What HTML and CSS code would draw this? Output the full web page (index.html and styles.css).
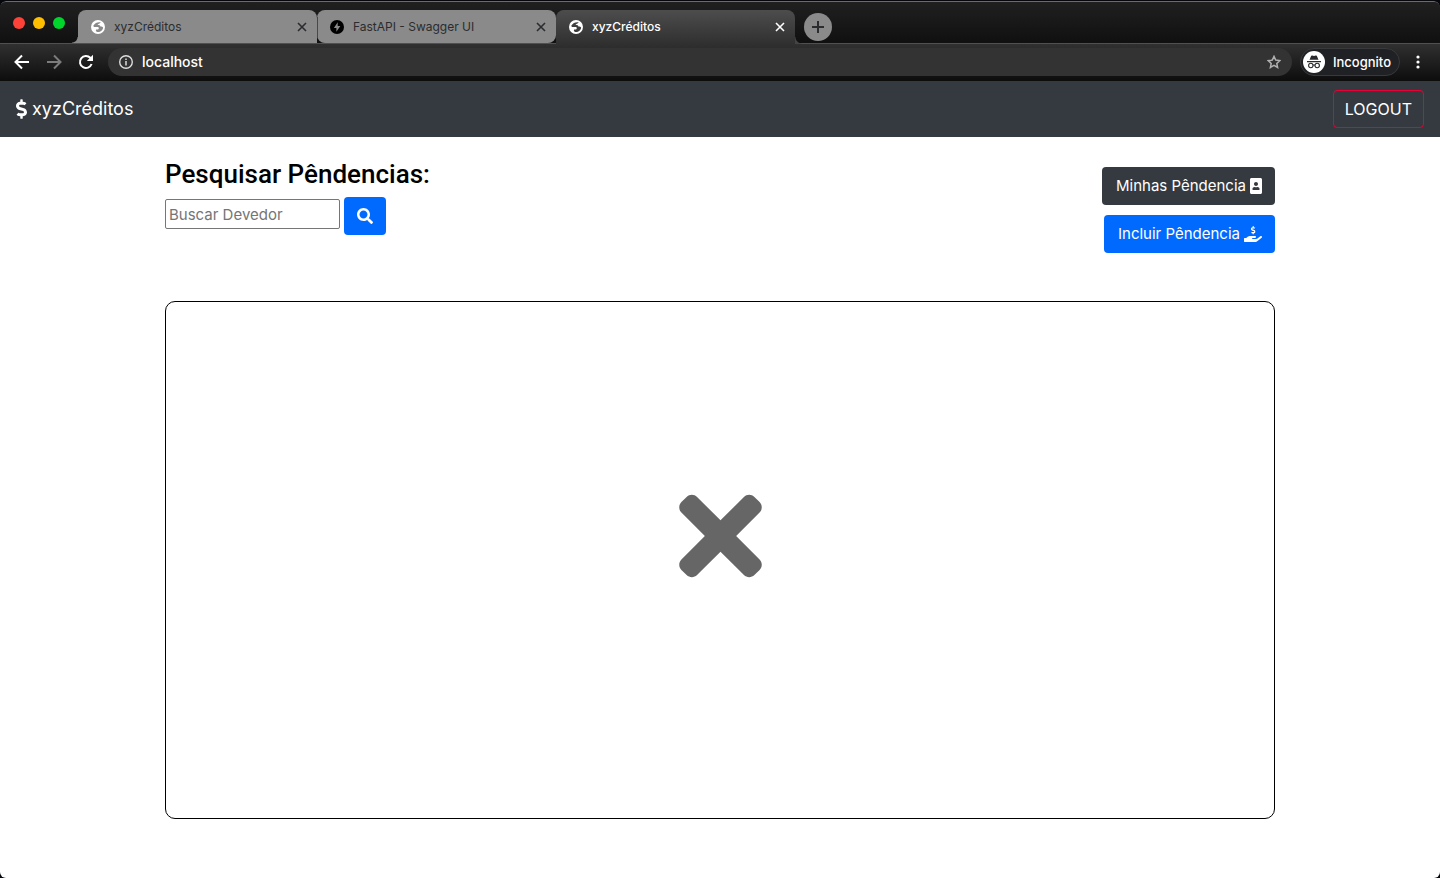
FILE: index.html
```
<!DOCTYPE html>
<html lang="pt-BR">
<head>
<meta charset="utf-8">
<meta name="viewport" content="width=device-width, initial-scale=1">
<title>xyzCréditos</title>
<link rel="stylesheet" href="styles.css">
</head>
<body>
<svg class="symbols" aria-hidden="true">
  <symbol id="globe" viewBox="0 0 14 14"><path fill="currentColor" fill-rule="evenodd" d="M7 0a7 7 0 1 1 0 14A7 7 0 0 1 7 0ZM9.800 2.600C7.500 1.600 4 2.800 2.400 5.600c-.2.800.4 1.500 1.300 1.500h2.800c.8 0 1.300.5 1.300 1.200 0 .8-.7 1.200-1.600 1.200H5c-.5 1 .2 2.300 1.500 2.500 3 .2 5.500-1.900 5.600-4.500-.6-.9-1.600-1.200-2.600-1.100-.5-1.200-1.600-1.500-3-1.300.6-1.200 2.100-1.100 3.300-2.500Z"/></symbol>
  <symbol id="close" viewBox="0 0 10 10"><path d="M1 1l8 8M9 1L1 9" fill="none" stroke="currentColor" stroke-width="1.6"/></symbol>
  <symbol id="dollar" viewBox="0 0 288 512"><path fill="currentColor" d="M209.2 233.4l-108-31.6C88.7 198.2 80 186.5 80 173.5c0-16.3 13.2-29.5 29.5-29.5h66.3c12.2 0 24.2 3.7 34.2 10.5 6.1 4.1 14.3 3.1 19.5-2l34.8-34c7.1-6.9 6.1-18.4-1.8-24.5C238 74.8 207.4 64.1 176 64V16c0-8.8-7.2-16-16-16h-32c-8.800 0-16 7.200-16 16v48h-2.500C45.800 64-5.400 118.700.500 183.600c4.200 46.100 39.400 83.600 83.800 96.600l102.500 30c12.500 3.700 21.200 15.300 21.200 28.300 0 16.300-13.200 29.500-29.500 29.500h-66.300C100 368 88 364.300 78 357.500c-6.100-4.100-14.300-3.100-19.500 2l-34.800 34c-7.100 6.900-6.100 18.400 1.800 24.500 24.500 19.200 55.100 29.900 86.500 30v48c0 8.800 7.200 16 16 16h32c8.800 0 16-7.200 16-16v-48.200c46.600-.9 90.300-28.600 105.700-72.700 21.500-61.600-14.600-124.800-72.500-141.700z"/></symbol>
</svg>

<div class="window">
  <header class="browser">
    <div class="tabstrip">
      <div class="lights"><span class="light light-red"></span><span class="light light-yellow"></span><span class="light light-green"></span></div>
      <div class="tabs">
        <div class="tab tab-first"><svg class="favicon"><use href="#globe"/></svg><span class="tab-title">xyzCréditos</span><button class="tab-close" aria-label="Fechar aba"><svg><use href="#close"/></svg></button></div>
        <div class="tab tab-divided"><svg class="favicon favicon-dark" viewBox="0 0 14 14"><circle cx="7" cy="7" r="7" fill="currentColor"/><path d="M7.700 2.200L3.900 8h2.500v3.800L10.300 6H7.700Z" fill="#8a8a8a"/></svg><span class="tab-title">FastAPI - Swagger UI</span><button class="tab-close" aria-label="Fechar aba"><svg><use href="#close"/></svg></button></div>
        <div class="tab tab-active"><svg class="favicon"><use href="#globe"/></svg><span class="tab-title">xyzCréditos</span><button class="tab-close" aria-label="Fechar aba"><svg><use href="#close"/></svg></button></div>
      </div>
      <button class="new-tab" aria-label="Nova aba"><svg viewBox="0 0 12 12"><path d="M6 0v12M0 6h12" stroke="currentColor" stroke-width="2"/></svg></button>
    </div>
    <div class="toolbar">
      <div class="nav-buttons">
        <button class="nav-button" aria-label="Voltar"><svg viewBox="0 0 16 16"><path d="M15 8H2M8 1.500L1.500 8 8 14.500" fill="none" stroke="currentColor" stroke-width="2"/></svg></button>
        <button class="nav-button nav-button-off" aria-label="Avançar"><svg viewBox="0 0 16 16"><path d="M1 8h13M8 1.500L14.500 8 8 14.500" fill="none" stroke="currentColor" stroke-width="2"/></svg></button>
        <button class="nav-button" aria-label="Recarregar"><svg viewBox="0 0 16 16"><path d="M13.600 10A6 6 0 1 1 12.300 3.800L13.500 5" fill="none" stroke="currentColor" stroke-width="2"/><path d="M15 .8v6.200H8.800Z" fill="currentColor"/></svg></button>
      </div>
      <div class="omnibox">
        <svg class="info" viewBox="0 0 14 14"><circle cx="7" cy="7" r="6.300" fill="none" stroke="currentColor" stroke-width="1.400"/><path d="M7 6v4.500M7 3.400v1.500" stroke="currentColor" stroke-width="1.500"/></svg>
        <input class="address" type="text" value="localhost" aria-label="Endereço">
        <button class="star" aria-label="Favoritar"><svg viewBox="0 0 14 14"><path d="M7 1.400l1.700 3.700 4.200.5-3.100 2.800.8 4.100L7 10.400l-3.600 2.100.8-4.100L1.100 5.600l4.200-.5Z" fill="none" stroke="currentColor" stroke-width="1.500"/></svg></button>
      </div>
      <button class="incognito"><svg viewBox="0 0 22 22"><circle cx="11" cy="11" r="11" fill="#fff"/><path d="M6.500 8.700L8 5.200c.2-.6.700-.8 1.300-.6l1.700.5 1.700-.5c.6-.2 1.100 0 1.300.6l1.500 3.500Z" fill="#292a2d"/><path d="M4 10.600h14" stroke="#292a2d" stroke-width="1.200"/><circle cx="7.800" cy="14.500" r="2.200" fill="none" stroke="#292a2d" stroke-width="1.100"/><circle cx="14.200" cy="14.500" r="2.200" fill="none" stroke="#292a2d" stroke-width="1.100"/><path d="M10 14.200q1-.6 2 0" fill="none" stroke="#292a2d"/></svg>Incognito</button>
      <button class="menu" aria-label="Menu"><svg viewBox="0 0 4 14"><g fill="currentColor"><circle cx="2" cy="2" r="1.600"/><circle cx="2" cy="7" r="1.600"/><circle cx="2" cy="12" r="1.600"/></g></svg></button>
    </div>
  </header>

  <nav class="navbar">
    <a class="brand" href="#"><svg><use href="#dollar"/></svg>xyzCréditos</a>
    <button class="button button-logout">LOGOUT</button>
  </nav>

  <main class="container">
    <div class="top">
      <form class="search">
        <label class="heading" for="devedor">Pesquisar Pêndencias:</label>
        <div class="search-row">
          <input class="search-input" id="devedor" type="text" placeholder="Buscar Devedor">
          <button class="button button-primary" type="button" aria-label="Buscar"><svg class="icon" viewBox="0 0 512 512"><path fill="currentColor" d="M505 442.700L405.300 343c-4.500-4.500-10.600-7-17-7H372c27.600-35.300 44-79.700 44-128C416 93.100 322.900 0 208 0S0 93.100 0 208s93.100 208 208 208c48.300 0 92.700-16.400 128-44v16.300c0 6.400 2.500 12.500 7 17l99.700 99.700c9.400 9.400 24.600 9.400 33.900 0l28.300-28.300c9.400-9.400 9.400-24.600.1-34zM208 336c-70.700 0-128-57.200-128-128 0-70.700 57.200-128 128-128 70.700 0 128 57.200 128 128 0 70.700-57.200 128-128 128z"/></svg></button>
        </div>
      </form>
      <div class="actions">
        <button class="button button-dark">Minhas Pêndencia<svg class="icon icon-narrow" viewBox="0 0 384 512"><path fill="currentColor" d="M336 0H48C21.500 0 0 21.500 0 48v416c0 26.500 21.500 48 48 48h288c26.500 0 48-21.500 48-48V48c0-26.500-21.500-48-48-48zM192 128c35.300 0 64 28.700 64 64s-28.700 64-64 64-64-28.700-64-64 28.700-64 64-64zm112 236.800c0 10.600-10 19.200-22.400 19.200H102.400C90 384 80 375.400 80 364.800v-19.200c0-31.800 30.100-57.600 67.200-57.600h5c12.300 5.100 25.700 8 39.800 8s27.600-2.900 39.800-8h5c37.100 0 67.200 25.800 67.200 57.600v19.200z"/></svg></button>
        <button class="button button-primary">Incluir Pêndencia<svg class="icon icon-wide" viewBox="0 0 576 512"><path fill="currentColor" d="M565.300 328.100c-11.800-10.700-30.200-10-42.600 0L430.300 402c-11.300 9.100-25.400 14-40 14H272c-8.800 0-16-7.200-16-16s7.200-16 16-16h78.300c15.900 0 30.700-10.900 33.300-26.600 3.300-20-12.100-37.400-31.600-37.400H192c-27 0-53.100 9.300-74.100 26.300L71.400 384H16c-8.800 0-16 7.200-16 16v96c0 8.800 7.200 16 16 16h356.800c14.500 0 28.600-4.900 40-14L564 377c15.200-12.100 16.400-35.300 1.300-48.900z"/><use href="#dollar" x="220" y="0" width="150" height="272"/></svg></button>
      </div>
    </div>
    <section class="results" aria-label="Nenhum resultado">
      <svg class="empty" viewBox="0 0 352 512"><path fill="currentColor" d="M242.720 256l100.070-100.070c12.280-12.280 12.280-32.190 0-44.480l-22.240-22.240c-12.280-12.280-32.190-12.280-44.480 0L176 189.280 75.930 89.210c-12.280-12.280-32.190-12.280-44.480 0L9.210 111.450c-12.280 12.280-12.280 32.190 0 44.480L109.280 256 9.210 356.070c-12.280 12.280-12.280 32.190 0 44.480l22.240 22.240c12.280 12.280 32.200 12.280 44.480 0L176 322.720l100.070 100.070c12.280 12.280 32.200 12.280 44.480 0l22.240-22.240c12.280-12.280 12.280-32.190 0-44.480L242.720 256z"/></svg>
    </section>
  </main>
</div>
</body>
</html>
```
FILE: styles.css
```
* { box-sizing: border-box; }
body {
  margin: 0;
  background: #05070c;
  color: #000;
  font-family: Inter, "Liberation Sans", sans-serif;
  font-size: 15px;
  line-height: 24px;
}
button, input { font: inherit; color: inherit; }
button { border: 0; padding: 0; background: none; cursor: pointer; }
svg { display: block; flex: none; }
.symbols { position: absolute; width: 0; height: 0; }
.window {
  min-height: 100vh;
  padding-top: 1px;
  border-radius: 6px;
  overflow: hidden;
  background: linear-gradient(#05070c 8px, #fff 8px);
}

/* browser chrome */
.browser { color: #fff; font-size: 12px; border-radius: 6px 6px 0 0; overflow: hidden; }
.tabstrip {
  display: flex;
  align-items: flex-end;
  height: 43px;
  padding-left: 13px;
  border-top: 1px solid #6b6b6b;
  border-bottom: 1px solid #505050;
  border-radius: 6px 6px 0 0;
  background: linear-gradient(#202020, #101010);
}
.lights { display: flex; gap: 8px; width: 65px; padding-bottom: 14px; flex: none; }
.light { width: 12px; height: 12px; border-radius: 50%; }
.light-red { background: #ff4238; }
.light-yellow { background: #ffbf00; }
.light-green { background: #00d52b; }
.tabs { display: flex; flex: 0 1 717px; min-width: 0; }
.tab {
  position: relative;
  display: flex;
  align-items: center;
  flex: 1;
  min-width: 0;
  height: 33px;
  padding: 0 9px 0 13px;
  border-radius: 8px 8px 0 0;
  background: #8a8a8a;
  color: #2b2c2f;
}
.tab-first::before {
  content: "";
  position: absolute;
  left: -6px;
  bottom: 0;
  width: 6px;
  height: 6px;
  background: radial-gradient(circle at 0 0, transparent 5px, #8a8a8a 6px);
}
.tab-divided { border-radius: 8px; }
.tab-divided::before {
  content: "";
  position: absolute;
  left: 0;
  top: 7px;
  width: 1px;
  height: 21px;
  background: #47484a;
}
.tab-active {
  height: 34px;
  margin-bottom: -1px;
  background: linear-gradient(#4d4d4d, #303030);
  color: #fff;
}
.tab-active::after {
  content: "";
  position: absolute;
  right: -7px;
  bottom: 0;
  width: 7px;
  height: 7px;
  background: radial-gradient(circle at 100% 0, transparent 6px, #444 7px);
}
.favicon { width: 14px; height: 14px; color: #fff; }
.favicon-dark { color: #000; }
.tab-title { flex: 1; margin-left: 9px; overflow: hidden; white-space: nowrap; }
.tab-active .tab-title { font-weight: 500; }
.tab-close { padding: 0 1px; }
.tab-close svg { width: 10px; height: 10px; }
.new-tab {
  display: grid;
  place-items: center;
  width: 28px;
  height: 28px;
  margin: 0 0 2px 9px;
  border-radius: 50%;
  background: #8a8a8a;
  color: #2b2c2f;
}
.new-tab svg { width: 12px; height: 12px; }
.toolbar {
  display: flex;
  align-items: center;
  gap: 8px;
  height: 37px;
  padding: 0 20px 2px 14px;
  background: linear-gradient(#303030, #0d0d0d);
}
.nav-buttons { display: flex; gap: 16px; margin-right: 6px; }
.nav-button svg { width: 16px; height: 16px; }
.nav-button-off { color: #7c7c7c; }
.omnibox {
  display: flex;
  align-items: center;
  flex: 1;
  min-width: 0;
  height: 28px;
  padding: 0 11px;
  border-radius: 14px;
  background: #333;
}
.info { width: 14px; height: 14px; margin-right: 9px; color: #ddd; }
.address { flex: 1; min-width: 0; padding: 0; border: 0; background: none; font-size: 14px; font-weight: 500; }
.star svg { width: 14px; height: 14px; color: #b0b0b0; }
.incognito {
  display: flex;
  align-items: center;
  gap: 8px;
  height: 28px;
  padding: 0 8px 0 2px;
  border: 1px solid #38393b;
  border-radius: 14px;
  background: #202124;
  font-size: 13px;
  font-weight: 500;
}
.incognito svg { width: 22px; height: 22px; }
.menu { margin-left: 8px; }
.menu svg { width: 4px; height: 14px; }

/* application */
.navbar {
  display: flex;
  align-items: center;
  justify-content: space-between;
  height: 56px;
  padding: 0 16px;
  background: #343a40;
  color: #fff;
}
.brand { display: flex; align-items: center; gap: 5px; color: #fff; font-size: 18px; text-decoration: none; }
.brand svg { width: 11px; height: 20px; }
.button {
  display: inline-flex;
  align-items: center;
  gap: 4px;
  height: 38px;
  padding: 0 13px;
  border-radius: 4px;
  color: #fff;
  white-space: nowrap;
}
.button-logout { padding: 0 11px; border: 1px solid #ea0034; font-size: 16px; }
.button-primary { background: #006aff; }
.button-dark { background: #343a40; }
.actions .button { padding: 0 13px 0 14px; }
.icon { width: 16px; height: 16px; }
.icon-narrow { width: 12px; }
.icon-wide { width: 18px; }
.container { width: 100%; max-width: 1140px; margin: 0 auto; padding: 20px 15px 59px; }
.top { display: flex; justify-content: space-between; gap: 24px; }
.heading {
  display: block;
  margin-bottom: 6px;
  font-family: Roboto, "Liberation Sans", sans-serif;
  font-size: 26px;
  font-weight: 500;
  line-height: 34px;
}
.search-row { display: flex; align-items: flex-start; gap: 4px; }
.search-input {
  width: 175px;
  height: 30px;
  margin-top: 2px;
  padding: 1px 3px;
  border: 1px solid #767676;
  border-radius: 2px;
  background: #fff;
}
.search-input::placeholder { color: #757575; opacity: 1; }
.actions { display: flex; flex-direction: column; align-items: flex-end; gap: 10px; padding-top: 10px; }
.results {
  display: grid;
  place-items: center;
  height: 59vh;
  margin-top: 48px;
  padding-bottom: 48px;
  border: 1px solid #000;
  border-radius: 10px;
}
.empty { width: 83px; height: 120px; color: #666; }
```
